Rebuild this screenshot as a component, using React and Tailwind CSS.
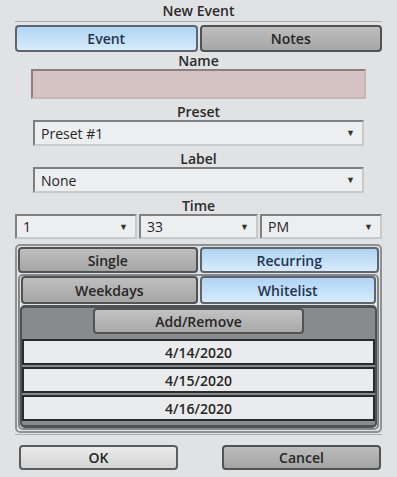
import React from "react";

const font = { fontFamily: "'Open Sans', 'Noto Sans', sans-serif" };

const Tab = ({ active, children, className = "" }) => (
  <div
    className={`flex flex-1 items-center justify-center rounded-[4px] border-2 text-[14px] font-semibold ${
      active
        ? "border-[#5e656c] bg-gradient-to-b from-[#afd4f3] to-[#d8ebfa] text-[#1e3550]"
        : "border-[#505356] bg-gradient-to-b from-[#bebebe] to-[#a6a6a6] text-[#262626]"
    } ${className}`}
  >
    {children}
  </div>
);

const Select = ({ value, className = "" }) => (
  <div
    className={`flex items-center justify-between border-2 border-t-[#7f7f7f] border-l-[#7f7f7f] border-r-[#c9c9c9] border-b-[#c9c9c9] bg-[#eceef0] pl-[6px] pr-[7px] text-[14px] text-[#262626] ${className}`}
  >
    <span>{value}</span>
    <span className="text-[9px] text-[#333]">▼</span>
  </div>
);

const Label = ({ children, className = "" }) => (
  <div className={`h-[16px] text-center text-[14px] font-semibold leading-[16px] text-[#2b2b2b] ${className}`}>
    {children}
  </div>
);

export default function App() {
  return (
    <div className="flex h-[477px] w-[397px] flex-col bg-[#e1e2e3]" style={font}>
      <div className="h-[21px] pt-[1px] text-center text-[14px] font-semibold leading-[19px] text-[#2b2b2b]">
        New Event
      </div>
      <div className="mx-[15px] h-px bg-[#aeaeae]" />

      <div className="mx-[15px] mt-[3px] flex h-[27px] gap-[2px]">
        <Tab active>Event</Tab>
        <Tab>Notes</Tab>
      </div>

      <Label className="mt-[1px]">Name</Label>
      <div className="mx-[31px] h-[30px] border-2 border-t-[#8c7f7f] border-l-[#8c7f7f] border-r-[#c3b8b8] border-b-[#c3b8b8] bg-[#d5c3c3]" />

      <Label className="mt-[5px]">Preset</Label>
      <Select value="Preset #1" className="mx-[33px] h-[26px]" />

      <Label className="mt-[5px]">Label</Label>
      <Select value="None" className="mx-[33px] h-[26px]" />

      <Label className="mt-[5px]">Time</Label>
      <div className="mx-[15px] flex h-[25px] gap-[2px]">
        <Select value="1" className="w-[122px]" />
        <Select value="33" className="w-[119px]" />
        <Select value="PM" className="flex-1" />
      </div>

      <div className="mx-[15px] mt-[5px] flex h-[189px] flex-col rounded-[5px] border-2 border-[#8e9194] p-[1px]">
        <div className="flex h-[26px] gap-[2px]">
          <Tab>Single</Tab>
          <Tab active>Recurring</Tab>
        </div>
        <div className="mt-[1px] flex flex-1 flex-col rounded-[5px] border-2 border-[#85888b]">
          <div className="mx-px flex h-[28px] gap-[2px]">
            <Tab>Weekdays</Tab>
            <Tab active>Whitelist</Tab>
          </div>
          <div className="mt-[1px] flex flex-1 flex-col rounded-[5px] border-[3px] border-x-2 border-[#4d5257] bg-[#898a8b]">
            <div className="flex justify-center">
              <div className="flex h-[26px] w-[211px] items-center justify-center rounded-[4px] border-2 border-[#515457] bg-gradient-to-b from-[#c2c2c2] to-[#a9a9a9] text-[14px] font-semibold text-[#262626]">
                Add/Remove
              </div>
            </div>
            <div className="mt-[5px] flex flex-col gap-[2px]">
              {["4/14/2020", "4/15/2020", "4/16/2020"].map((d) => (
                <div
                  key={d}
                  className="flex h-[26px] items-center justify-center border-2 border-[#2b2b2b] bg-[#eaebed] text-[14px] font-semibold text-[#262626]"
                >
                  {d}
                </div>
              ))}
            </div>
          </div>
        </div>
      </div>

      <div className="mx-[15px] mt-[1px] h-px bg-[#aeaeae]" />

      <div className="mt-[10px] flex justify-between pl-[19px] pr-[16px]">
        <div className="flex h-[25px] w-[159px] items-center justify-center rounded-[4px] border-2 border-[#5a5d60] bg-gradient-to-b from-[#ebebeb] to-[#d4d4d4] text-[14px] font-semibold text-[#262626]">
          OK
        </div>
        <div className="flex h-[25px] w-[159px] items-center justify-center rounded-[4px] border-2 border-[#505356] bg-gradient-to-b from-[#bcbcbc] to-[#a4a4a4] text-[14px] font-semibold text-[#262626]">
          Cancel
        </div>
      </div>
    </div>
  );
}
